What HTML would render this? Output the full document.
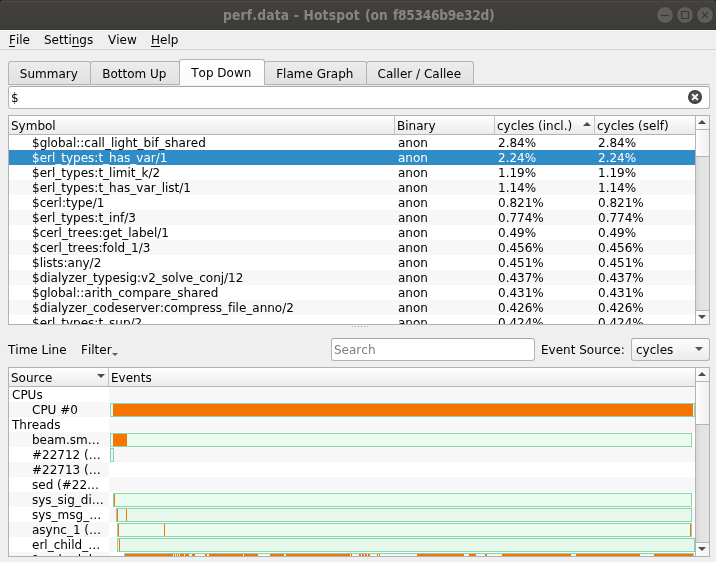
<!DOCTYPE html>
<html>
<head>
<meta charset="utf-8">
<title>perf.data - Hotspot</title>
<style>
*{box-sizing:border-box;margin:0;padding:0}
html,body{width:716px;height:562px;overflow:hidden;background:#efefef}
body{position:relative;font-family:"DejaVu Sans","Liberation Sans",sans-serif;font-size:12px;color:#000;line-height:15px;font-variant-ligatures:none;font-kerning:none}
#root{position:absolute;left:0;top:0;width:716px;height:562px;will-change:transform;overflow:hidden}
.abs{position:absolute;white-space:nowrap}
#corner{left:0;top:0;width:716px;height:8px;background:#2c001e}
#titlebar{left:0;top:0;width:716px;height:30px;background:linear-gradient(#3f3e3a 0,#3f3e3a 1px,#4b4a45 1px,#4b4a45 2px,#42413d 2px,#3c3b37 29px,#3a3935 29px,#3a3935 30px);border-radius:3px 3px 0 0}
#title{left:0;top:7px;width:716px;height:16px;color:#888680;font-family:"DejaVu Sans Condensed","DejaVu Sans","Liberation Sans",sans-serif;font-weight:bold;font-size:13.67px;line-height:16px}
#menubar{left:0;top:30px;width:716px;height:20px;border-top:1px solid #f8f8f8;border-bottom:1px solid #d6d6d6}
.mi{top:33px}
u{text-decoration:none;background:linear-gradient(#000,#000) no-repeat 0 13px / calc(100% - 1px) 1px}
.tab{padding-right:1.4px;top:61px;height:24px;border:1px solid #b4b4b4;border-bottom:1px solid #b0b0b0;border-radius:3px 3px 0 0;background:linear-gradient(#ececec,#e1e1e1);text-align:center;line-height:25px}
.tab.sel{top:59px;height:26px;border-bottom:none;background:linear-gradient(#ffffff,#fafafa);line-height:27px;z-index:2;border-color:#b4b4b4}
#tabline{left:8px;top:84px;width:702px;height:1px;background:#bcbcbc}
.edit{background:#fff;border:1px solid #b4b4b4;border-top-color:#a6a6a6;border-radius:3px}
.frame{border:1px solid #b2b2b2;background:#fff;overflow:hidden}
.hdr{left:0;top:0;height:19px;background:linear-gradient(#fefefe,#ebebeb);border-bottom:1px solid #b4b4b4;width:686px}
.hc{top:0;height:18px;line-height:20px;padding-left:2px;border-right:1px solid #c4c4c4}
.row{left:0;width:686px;height:15px}
.row.alt{background:#f7f7f7}
.row.sel{background:#308cc6;color:#fff}
.row span{position:absolute;top:1px;line-height:15px;white-space:nowrap}
.c1{left:23px}.c2{left:389px}.c3{left:489px}.c4{left:589px}
.sb{background:linear-gradient(90deg,#d6d6d6,#e2e2e2 4px,#e5e5e5);border-left:1px solid #b4b4b4;width:14px;left:686px;top:0}
.sbb{left:0;width:13px;height:14px;background:linear-gradient(90deg,#fdfdfd,#f2f2f2)}
.sbh{left:0;width:13px;background:linear-gradient(90deg,#fdfdfd,#efefef);border-top:1px solid #b4b4b4;border-bottom:1px solid #b4b4b4}
.tri{width:0;height:0;border-left:4px solid transparent;border-right:4px solid transparent}
.tri.up{border-bottom:4px solid #4c4c4c}
.tri.dn{border-top:4px solid #4c4c4c}
.bar{border:1px solid #8ad5ab;background:#eafbf0;height:14px}
.ev.alt .bar{background:#e7f7ec}
.or{background:#f67400;top:0;height:12px}
.src{left:0;width:100px;height:15px;overflow:hidden}
.src.alt{background:#f7f7f7}
.ev{left:100px;width:586px;height:15px}
.ev.alt{background:#f7f7f7}
.src span{position:absolute;top:1px;line-height:15px}
</style>
</head>
<body>
<div id="root">
<div id="corner" class="abs"></div>
<div id="titlebar" class="abs"></div>
<div id="title" class="abs"><span class="abs" style="left:223px;letter-spacing:.2px">perf.data - Hotspot</span><span class="abs" style="left:365px">(on</span><span class="abs" style="left:393px;letter-spacing:-.3px">f85346b9e32d)</span></div>
<svg class="abs" style="left:655px;top:5px" width="60" height="20" viewBox="0 0 60 20">
<g stroke="#373632" stroke-width="0.8" fill="#5f5e58"><circle cx="10" cy="10" r="8.4"/><circle cx="30" cy="10" r="8.4"/><circle cx="50" cy="10" r="8.4"/></g>
<g stroke="#3a3935" stroke-width="1.1" fill="none"><path d="M6 10.5h8"/><rect x="26.5" y="6.5" width="7" height="7"/><path d="M47 7l6 6M53 7l-6 6"/></g>
</svg>
<div id="menubar" class="abs"></div>
<div class="abs mi" style="left:9px"><u>F</u>ile</div>
<div class="abs mi" style="left:44px">Setti<u style="background-size:100% 1px">n</u>gs</div>
<div class="abs mi" style="left:108px">View</div>
<div class="abs mi" style="left:151px"><u style="background-size:100% 1px">H</u>elp</div>
<div id="tabline" class="abs"></div>
<div class="abs tab" style="left:8px;width:83px">Summary</div>
<div class="abs tab" style="left:90px;width:90px">Bottom Up</div>
<div class="abs tab sel" style="left:179px;width:86px">Top Down</div>
<div class="abs tab" style="left:264px;width:103px">Flame Graph</div>
<div class="abs tab" style="left:366px;width:108px">Caller / Callee</div>
<div class="abs edit" style="left:8px;top:86px;width:702px;height:23px"></div>
<div class="abs" style="left:11px;top:91px">$</div>
<svg class="abs" style="left:688px;top:90px" width="14" height="14" viewBox="0 0 14 14"><defs><radialGradient id="cg" cx="50%" cy="50%" r="50%"><stop offset="0" stop-color="#606060"/><stop offset="0.6" stop-color="#555"/><stop offset="1" stop-color="#333"/></radialGradient></defs><circle cx="7" cy="7" r="7" fill="url(#cg)"/><path d="M4.6 4.6l4.8 4.8M9.4 4.6l-4.8 4.8" stroke="#fff" stroke-width="1.8" stroke-linecap="round" fill="none"/></svg>
<div class="abs frame" id="t1" style="left:8px;top:115px;width:702px;height:210px">
<div class="abs hdr"></div>
<div class="abs hc" style="left:0;width:386px">Symbol</div>
<div class="abs hc" style="left:386px;width:100px">Binary</div>
<div class="abs hc" style="left:486px;width:100px">cycles (incl.)</div>
<div class="abs hc" style="left:586px;width:100px;border-right:none">cycles (self)</div>
<div class="abs tri up" style="left:574px;top:6px"></div>
<div class="abs row" style="top:19px"><span class="c1">$global::call_light_bif_shared</span><span class="c2">anon</span><span class="c3">2.84%</span><span class="c4">2.84%</span></div>
<div class="abs row sel" style="top:34px"><span class="c1">$erl_types:t_has_var/1</span><span class="c2">anon</span><span class="c3">2.24%</span><span class="c4">2.24%</span></div>
<div class="abs row" style="top:49px"><span class="c1">$erl_types:t_limit_k/2</span><span class="c2">anon</span><span class="c3">1.19%</span><span class="c4">1.19%</span></div>
<div class="abs row alt" style="top:64px"><span class="c1">$erl_types:t_has_var_list/1</span><span class="c2">anon</span><span class="c3">1.14%</span><span class="c4">1.14%</span></div>
<div class="abs row" style="top:79px"><span class="c1">$cerl:type/1</span><span class="c2">anon</span><span class="c3">0.821%</span><span class="c4">0.821%</span></div>
<div class="abs row alt" style="top:94px"><span class="c1">$erl_types:t_inf/3</span><span class="c2">anon</span><span class="c3">0.774%</span><span class="c4">0.774%</span></div>
<div class="abs row" style="top:109px"><span class="c1">$cerl_trees:get_label/1</span><span class="c2">anon</span><span class="c3">0.49%</span><span class="c4">0.49%</span></div>
<div class="abs row alt" style="top:124px"><span class="c1">$cerl_trees:fold_1/3</span><span class="c2">anon</span><span class="c3">0.456%</span><span class="c4">0.456%</span></div>
<div class="abs row" style="top:139px"><span class="c1">$lists:any/2</span><span class="c2">anon</span><span class="c3">0.451%</span><span class="c4">0.451%</span></div>
<div class="abs row alt" style="top:154px"><span class="c1">$dialyzer_typesig:v2_solve_conj/12</span><span class="c2">anon</span><span class="c3">0.437%</span><span class="c4">0.437%</span></div>
<div class="abs row" style="top:169px"><span class="c1">$global::arith_compare_shared</span><span class="c2">anon</span><span class="c3">0.431%</span><span class="c4">0.431%</span></div>
<div class="abs row alt" style="top:184px"><span class="c1">$dialyzer_codeserver:compress_file_anno/2</span><span class="c2">anon</span><span class="c3">0.426%</span><span class="c4">0.426%</span></div>
<div class="abs row" style="top:199px"><span class="c1">$erl_types:t_sup/2</span><span class="c2">anon</span><span class="c3">0.424%</span><span class="c4">0.424%</span></div>
<div class="abs sb" style="height:208px"><div class="abs sbb" style="top:0"></div><div class="abs tri up" style="left:2px;top:4px"></div><div class="abs sbh" style="top:13px;height:28px"></div><div class="abs sbb" style="top:194px;border-top:1px solid #b4b4b4"></div><div class="abs tri dn" style="left:2px;top:199px"></div></div>
</div>
<div class="abs" style="left:352px;top:326px;width:1px;height:1px;background:#a8a8a8"></div>
<div class="abs" style="left:355px;top:326px;width:1px;height:1px;background:#a8a8a8"></div>
<div class="abs" style="left:358px;top:326px;width:1px;height:1px;background:#a8a8a8"></div>
<div class="abs" style="left:361px;top:326px;width:1px;height:1px;background:#a8a8a8"></div>
<div class="abs" style="left:364px;top:326px;width:1px;height:1px;background:#a8a8a8"></div>
<div class="abs" style="left:367px;top:326px;width:1px;height:1px;background:#a8a8a8"></div>
<div class="abs" style="left:8px;top:343px">Time Line</div>
<div class="abs" style="left:81px;top:343px">Filter</div>
<div class="abs" style="left:112px;top:353px;width:0;height:0;border-left:3px solid transparent;border-right:3px solid transparent;border-top:3px solid #5c5c5c"></div>
<div class="abs edit" style="left:331px;top:338px;width:204px;height:23px"></div>
<div class="abs" style="left:334px;top:343px;color:#808080">Search</div>
<div class="abs" style="left:541px;top:343px">Event Source:</div>
<div class="abs edit" style="left:631px;top:338px;width:79px;height:23px;background:linear-gradient(#fefefe,#ebebeb)"></div>
<div class="abs" style="left:636px;top:343px">cycles</div>
<div class="abs tri dn" style="left:695px;top:347px;border-top-color:#555"></div>
<div class="abs frame" id="t2" style="left:8px;top:367px;width:702px;height:190px">
<div class="abs hdr"></div>
<div class="abs hc" style="left:0;width:100px">Source</div>
<div class="abs hc" style="left:100px;width:586px;border-right:none">Events</div>
<div class="abs tri dn" style="left:88px;top:6px"></div>
<div class="abs src" style="top:19px"><span style="left:3px">CPUs</span></div>
<div class="abs ev alt" style="top:19px"></div>
<div class="abs src alt" style="top:34px"><span style="left:23px">CPU #0</span></div>
<div class="abs ev" style="top:34px"><div class="abs bar" style="left:1px;top:1px;width:585px"><div class="abs or" style="left:2px;width:580px"></div></div></div>
<div class="abs src" style="top:49px"><span style="left:3px">Threads</span></div>
<div class="abs ev alt" style="top:49px"></div>
<div class="abs src alt" style="top:64px"><span style="left:23px">beam.sm…</span></div>
<div class="abs ev" style="top:64px"><div class="abs bar" style="left:1px;top:1px;width:582px"><div class="abs or" style="left:2px;width:14px"></div></div></div>
<div class="abs src" style="top:79px"><span style="left:23px">#22712 (…</span></div>
<div class="abs ev alt" style="top:79px"><div class="abs bar" style="left:1px;top:1px;width:4px"></div></div>
<div class="abs src alt" style="top:94px"><span style="left:23px">#22713 (…</span></div>
<div class="abs ev" style="top:94px"></div>
<div class="abs src" style="top:109px"><span style="left:23px">sed (#22…</span></div>
<div class="abs ev alt" style="top:109px"></div>
<div class="abs src alt" style="top:124px"><span style="left:23px">sys_sig_di…</span></div>
<div class="abs ev" style="top:124px"><div class="abs bar" style="left:4px;top:1px;width:579px"><div class="abs or" style="left:0px;width:1px"></div></div></div>
<div class="abs src" style="top:139px"><span style="left:23px">sys_msg_…</span></div>
<div class="abs ev alt" style="top:139px"><div class="abs bar" style="left:7px;top:1px;width:576px"><div class="abs or" style="left:0px;width:1px"></div><div class="abs or" style="left:9px;width:1px"></div></div></div>
<div class="abs src alt" style="top:154px"><span style="left:23px">async_1 (…</span></div>
<div class="abs ev" style="top:154px"><div class="abs bar" style="left:8px;top:1px;width:575px"><div class="abs or" style="left:0px;width:1px"></div><div class="abs or" style="left:46px;width:1px"></div><div class="abs or" style="left:572px;width:1px"></div></div></div>
<div class="abs src" style="top:169px"><span style="left:23px">erl_child_…</span></div>
<div class="abs ev alt" style="top:169px"><div class="abs bar" style="left:8px;top:1px;width:578px"><div class="abs or" style="left:1px;width:1px"></div></div></div>
<div class="abs src alt" style="top:184px"><span style="left:23px">1_schedul…</span></div>
<div class="abs ev" style="top:184px"><div class="abs bar" style="left:15px;top:1px;width:570px"><div class="abs or" style="left:0px;width:48px"></div><div class="abs or" style="left:49px;width:1px"></div><div class="abs or" style="left:51px;width:1px"></div><div class="abs or" style="left:53px;width:1px"></div><div class="abs or" style="left:55px;width:4px"></div><div class="abs or" style="left:60px;width:4px"></div><div class="abs or" style="left:67px;width:3px"></div><div class="abs or" style="left:80px;width:2px"></div><div class="abs or" style="left:84px;width:34px"></div><div class="abs or" style="left:119px;width:14px"></div><div class="abs or" style="left:145px;width:14px"></div><div class="abs or" style="left:161px;width:64px"></div><div class="abs or" style="left:226px;width:1px"></div><div class="abs or" style="left:234px;width:2px"></div><div class="abs or" style="left:237px;width:2px"></div><div class="abs or" style="left:240px;width:2px"></div><div class="abs or" style="left:243px;width:2px"></div><div class="abs or" style="left:252px;width:1px"></div><div class="abs or" style="left:254px;width:1px"></div><div class="abs or" style="left:292px;width:47px"></div><div class="abs or" style="left:344px;width:7px"></div><div class="abs or" style="left:360px;width:2px"></div><div class="abs or" style="left:377px;width:69px"></div><div class="abs or" style="left:451px;width:64px"></div><div class="abs or" style="left:529px;width:39px"></div></div></div>
<div class="abs sb" style="height:188px"><div class="abs sbb" style="top:0"></div><div class="abs tri up" style="left:2px;top:4px"></div><div class="abs sbh" style="top:13px;height:44px"></div><div class="abs sbb" style="top:174px;border-top:1px solid #b4b4b4"></div><div class="abs tri dn" style="left:2px;top:179px"></div></div>
</div>
</div>
</body>
</html>
